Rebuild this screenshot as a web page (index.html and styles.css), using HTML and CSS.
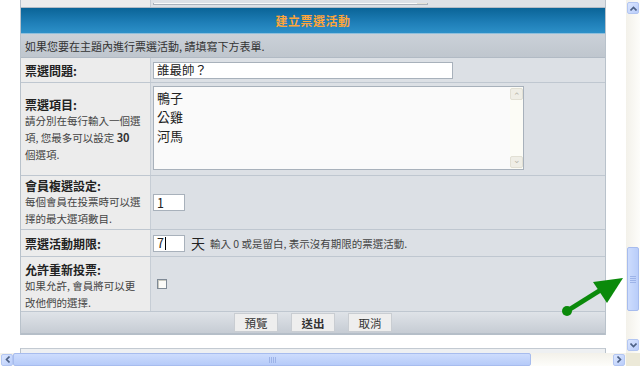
FILE: index.html
```html
<!DOCTYPE html>
<html lang="zh-Hant">
<head>
<meta charset="utf-8">
<link rel="stylesheet" href="styles.css">
</head>
<body>
<div class="window">
  <div class="viewport">
    <div class="forum prev">
      <div class="cell-l"></div>
      <div class="cell-r"><div class="prev-ta"><span class="prev-sb"></span></div></div>
    </div>
    <div class="forum">
      <div class="head">建立票選活動</div>
      <div class="info">如果您要在主題內進行票選活動, 請填寫下方表單.</div>
      <div class="row r-q">
        <div class="cell-l"><b class="lbl">票選問題:</b></div>
        <div class="cell-r"><div class="inp inp-q">誰最帥？</div></div>
      </div>
      <div class="row r-items">
        <div class="cell-l top"><b class="lbl">票選項目:</b><span class="note">請分別在每行輸入一個選項, 您最多可以設定 <b>30</b><br>個選項.</span></div>
        <div class="cell-r top">
          <div class="ta">
            <div class="ta-text">鴨子<br>公雞<br>河馬</div>
            <div class="ta-sb"><span class="ta-btn">&#8963;</span><span class="ta-btn dn">&#8964;</span></div>
          </div>
        </div>
      </div>
      <div class="row r-multi">
        <div class="cell-l top"><b class="lbl">會員複選設定:</b><span class="note">每個會員在投票時可以選擇的最大選項數目.</span></div>
        <div class="cell-r"><div class="inp inp-s">1</div></div>
      </div>
      <div class="row r-exp">
        <div class="cell-l"><b class="lbl">票選活動期限:</b></div>
        <div class="cell-r"><div class="inp inp-s">7<i class="caret"></i></div><span class="day">天</span><span class="hint">輸入 0 或是留白, 表示沒有期限的票選活動.</span></div>
      </div>
      <div class="row r-vote">
        <div class="cell-l top"><b class="lbl">允許重新投票:</b><span class="note">如果允許, 會員將可以更改他們的選擇.</span></div>
        <div class="cell-r"><span class="chk"></span></div>
      </div>
      <div class="btns">
        <span class="btn">預覽</span>
        <span class="btn strong">送出</span>
        <span class="btn">取消</span>
      </div>
    </div>
    <div class="forum next"></div>
    <svg class="arrow" width="80" height="50" viewBox="0 0 80 50">
      <line x1="8" y1="38" x2="40" y2="18" stroke="#0b8a0b" stroke-width="5" stroke-linecap="round"/>
      <circle cx="8" cy="38" r="5" fill="#0b8a0b"/>
      <polygon points="34,9 64,5 48,30" fill="#0b8a0b"/>
    </svg>
  </div>
  <div class="vbar">
    <span class="sbtn">
      <svg width="7" height="5" viewBox="0 0 7 5"><path d="M0.5 4.5 L3.5 1.5 L6.5 4.5" fill="none" stroke="#4d6185" stroke-width="1.6"/></svg>
    </span>
    <div class="vtrack"><span class="vthumb"><i></i><i></i><i></i><i></i></span></div>
    <span class="sbtn">
      <svg width="7" height="5" viewBox="0 0 7 5"><path d="M0.5 0.5 L3.5 3.5 L6.5 0.5" fill="none" stroke="#4d6185" stroke-width="1.6"/></svg>
    </span>
  </div>
  <div class="hbar">
    <span class="sbtn">
      <svg width="5" height="7" viewBox="0 0 5 7"><path d="M4.5 0.5 L1.5 3.5 L4.5 6.5" fill="none" stroke="#4d6185" stroke-width="1.6"/></svg>
    </span>
    <div class="htrack"><span class="hthumb"><i></i><i></i><i></i><i></i></span></div>
    <span class="sbtn">
      <svg width="5" height="7" viewBox="0 0 5 7"><path d="M0.5 0.5 L3.5 3.5 L0.5 6.5" fill="none" stroke="#4d6185" stroke-width="1.6"/></svg>
    </span>
  </div>
  <div class="corner"></div>
</div>
</body>
</html>
```

FILE: styles.css
```css
* { box-sizing: border-box; }
html, body { margin: 0; padding: 0; }
body {
  width: 640px; height: 366px; overflow: hidden; background: #fff;
  font-family: "Noto Sans CJK TC", "Liberation Sans", sans-serif;
  color: #333;
}
.window {
  display: grid;
  grid-template-columns: 626px 14px;
  grid-template-rows: 353px 13px;
  width: 640px; height: 366px;
}
.viewport { position: relative; overflow: hidden; background: #fff; }

.forum {
  margin-left: 20px; width: 586px;
  border-left: 1px solid #b9c2cb; border-right: 1px solid #b9c2cb;
  display: flex; flex-direction: column;
}
.prev {
  flex-direction: row; height: 8px;
  border-bottom: 1px solid #b3bcc6;
}
.prev .cell-l { width: 130px; background: #ececec; border-right: 1px solid #c6cdd5; }
.prev .cell-r { flex: 1; background: #dde1e6; padding-left: 2px; }
.prev-ta {
  width: 275px; height: 2px; background: #fafafa;
  border: 1px solid #a9b2bc; border-top: 0; position: relative;
}
.prev-sb { position: absolute; right: 0; top: 0; width: 10px; height: 1px; background: #e4e2d8; }

.head {
  height: 26px;
  background: linear-gradient(#0a6497, #1f7fb8 60%, #2d90c8);
  border-bottom: 1px solid #8fbfdc;
  color: #ffa53a; font-weight: bold; font-size: 12px;
  display: flex; align-items: center; justify-content: center;
  letter-spacing: 0.5px;
}
.info {
  height: 24px; padding-left: 4px;
  background: linear-gradient(#cbd1d8, #bfc6ce);
  border-bottom: 1px solid #b1bac4;
  font-size: 11px; color: #333;
  display: flex; align-items: center;
}
.row {
  display: grid; grid-template-columns: 130px 1fr;
  border-bottom: 1px solid #bfc7d0;
}
.cell-l {
  background: #ececec; border-right: 1px solid #c6cdd5;
  padding-left: 4px; display: flex; align-items: center;
}
.cell-r {
  background: #dce0e5; padding-left: 2px;
  display: flex; align-items: center;
}
.cell-l.top { flex-direction: column; align-items: flex-start; justify-content: center; }
.cell-r.top { align-items: flex-start; padding-top: 3px; }
.lbl { font-size: 12px; color: #222; line-height: 15px; }
.note { font-size: 10.5px; color: #444; line-height: 17px; width: 118px; }
.note b { font-size: 11px; color: #333; }

.r-q { height: 25px; }
.r-items { height: 93px; }
.r-items .cell-l { justify-content: flex-start; padding-top: 14px; }
.r-multi { height: 54px; }
.r-exp { height: 27px; }
.r-vote { height: 55px; }
.r-vote .cell-l { justify-content: flex-start; padding-top: 5px; }

.inp {
  background: #fff; border: 1px solid #a8b1bb;
  font-size: 12.5px; color: #222; line-height: 14px;
  padding-left: 3px; display: flex; align-items: center;
}
.inp-q { width: 300px; height: 17px; }
.inp-s { width: 32px; height: 17px; }
.caret { display: inline-block; width: 1px; height: 13px; background: #000; margin-left: 1px; }
.ta {
  width: 371px; height: 84px; background: #fafafa;
  border: 1px solid #a8b1bb; display: flex;
}
.ta-text { flex: 1; font-size: 13px; line-height: 19px; color: #222; padding: 1px 0 0 3px; }
.ta-sb {
  width: 13px; background: #fcfcf6; display: flex; flex-direction: column;
  justify-content: space-between; padding: 1px 0;
}
.ta-btn {
  height: 12px; background: #efeee6; border: 1px solid #e2e0d4; border-radius: 2px;
  font-size: 9px; color: #b8b6aa; line-height: 14px; text-align: center;
}
.ta-btn.dn { line-height: 6px; }
.day { font-size: 14px; color: #222; margin-left: 6px; }
.hint { font-size: 10.5px; color: #444; margin-left: 5px; }
.chk {
  width: 10px; height: 10px; border: 1px solid #7f8a96; background: #fbfbf8;
  margin-left: 4px; margin-top: -1px;
  box-shadow: inset 1px 1px 0 #c9c9c0;
}

.btns {
  height: 23px;
  background: linear-gradient(#dfe3e8, #c6ccd4);
  border-bottom: 2px solid #b5bec8;
  display: flex; justify-content: center; align-items: center; gap: 13px;
}
.btn {
  width: 44px; height: 19px; background: #eeeeee;
  border: 1px solid #c9cdd2; font-size: 11.5px; color: #333;
  display: flex; align-items: center; justify-content: center;
}
.btn.strong { font-weight: bold; }

.next {
  margin-top: 13px; height: 10px; border-top: 1px solid #c3cad2;
  background: #eef0f2;
}

.arrow { position: absolute; left: 559px; top: 273px; }

/* scrollbars */
.vbar {
  background: linear-gradient(90deg, #f3f1ea, #fdfdfa);
  display: flex; flex-direction: column; padding: 2px 0 2px 1px;
}
.sbtn {
  width: 12px; height: 12px; flex: none;
  background: linear-gradient(135deg, #dbe6ff, #b9cdfa);
  border: 1px solid #b3c6f2; border-radius: 2px;
  display: flex; align-items: center; justify-content: center;
}
.vtrack { flex: 1; display: flex; flex-direction: column; justify-content: flex-end; padding-bottom: 28px; }
.vthumb {
  width: 12px; height: 64px;
  background: linear-gradient(90deg, #cddcfd, #b9cdf9);
  border: 1px solid #a7bcee; border-radius: 2px;
  display: flex; flex-direction: column; align-items: center; justify-content: center; gap: 1px;
}
.vthumb i { display: block; width: 6px; height: 1px; background: #eef3ff; border-bottom: 1px solid #9db3e8; }
.hbar {
  background: linear-gradient(#f3f1ea, #fdfdfa);
  display: flex; align-items: center; padding: 0 1px 0 1px;
}
.htrack { flex: 1; height: 13px; display: flex; align-items: center; padding-right: 82px; }
.hthumb {
  flex: 1; height: 13px;
  background: linear-gradient(#cddcfd, #b6cbf9);
  border: 1px solid #a7bcee; border-radius: 2px;
  display: flex; align-items: center; justify-content: center; gap: 1px;
}
.hthumb i { display: block; width: 1px; height: 6px; background: #eef3ff; border-right: 1px solid #9db3e8; }
.hbar .sbtn { height: 12px; }
.corner { background: #ece9d8; }
```
